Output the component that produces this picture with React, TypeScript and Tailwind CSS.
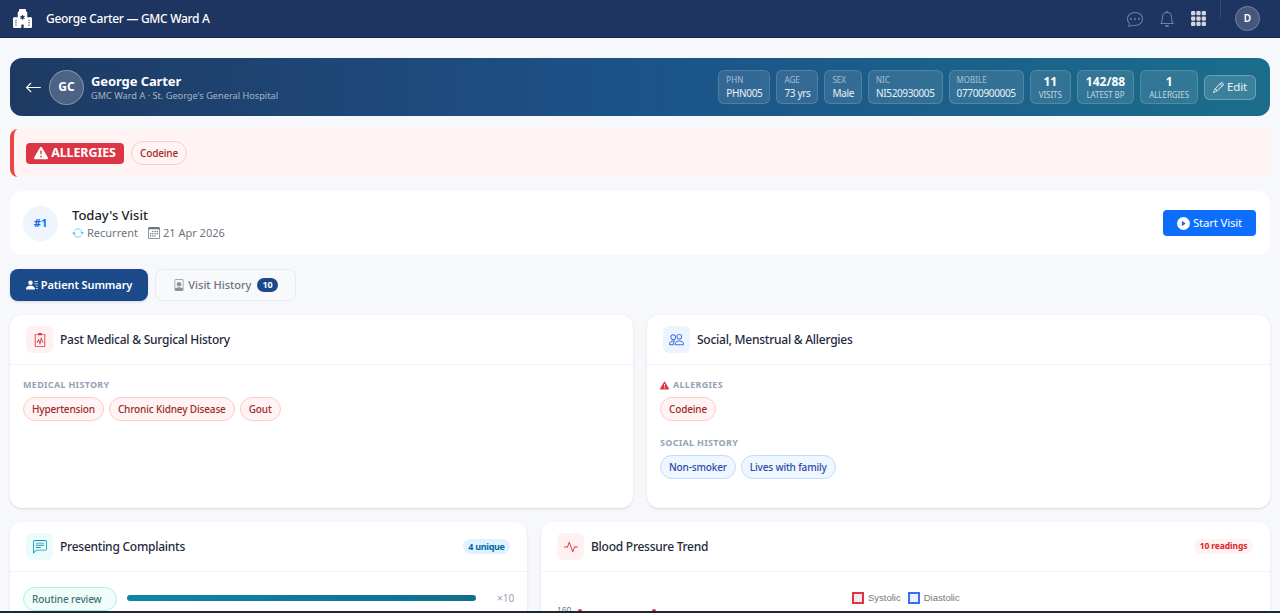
import React from 'react';
import {
  BsActivity,
  BsArrowLeft,
  BsArrowRepeat,
  BsBell,
  BsCalendar3,
  BsChatDots,
  BsChatLeftText,
  BsClipboard2Pulse,
  BsExclamationTriangleFill,
  BsFilePerson,
  BsGrid3X3GapFill,
  BsHospitalFill,
  BsPencil,
  BsPeople,
  BsPersonLinesFill,
  BsPlayCircleFill,
} from 'react-icons/bs';

const InfoBox = ({ label, value }: { label: string; value: string }) => (
  <div className="h-[34px] px-[7px] pt-[3px] rounded-md bg-white/10 border border-white/15">
    <div className="text-[8px] leading-[12px] text-white/55 uppercase">{label}</div>
    <div className="text-[10px] leading-[15px] tracking-[-0.35px] text-white/90 whitespace-nowrap">{value}</div>
  </div>
);

const StatBox = ({ value, label }: { value: string; label: string }) => (
  <div className="h-[34px] px-[8px] pt-[3px] rounded-md bg-white/10 border border-white/15 text-center">
    <div className="text-[12px] leading-[15px] font-bold text-white whitespace-nowrap">{value}</div>
    <div className="text-[8px] leading-[11px] tracking-[-0.05px] text-white/70 uppercase whitespace-nowrap">{label}</div>
  </div>
);

const Chip = ({ children, kind }: { children: string; kind: 'red' | 'blue' }) => (
  <span
    className={
      kind === 'red'
        ? 'h-[24px] px-2 flex items-center rounded-full border border-[#fecaca] bg-[#fff3f3] text-[10px] tracking-[-0.15px] font-medium text-[#9b2c2c]'
        : 'h-[24px] px-2 flex items-center rounded-full border border-[#bfdbfe] bg-[#eff6ff] text-[10px] tracking-[-0.15px] font-medium text-[#2c4aa8]'
    }
  >
    {children}
  </span>
);

const SectionLabel = ({ children }: { children: React.ReactNode }) => (
  <div className="flex items-center gap-1 text-[9px] leading-[12px] font-bold tracking-[0.3px] uppercase text-[#94a3b8]">
    {children}
  </div>
);

const CardHeader = ({
  icon,
  iconBg,
  title,
  badge,
}: {
  icon: React.ReactNode;
  iconBg: string;
  title: string;
  badge?: React.ReactNode;
}) => (
  <div className="h-[50px] pl-4 pr-[17px] flex items-center gap-[7px] border-b border-[#f1f5f9]">
    <div className={`w-[27px] h-[27px] rounded-md flex items-center justify-center ${iconBg}`}>{icon}</div>
    <div className="text-[12px] tracking-[-0.25px] font-medium text-[#1e293b]">{title}</div>
    {badge && <div className="ml-auto">{badge}</div>}
  </div>
);

export default function App() {
  return (
    <div
      className="relative h-[613px] overflow-hidden bg-[#f6f8fb]"
      style={{ fontFamily: '"Noto Sans", sans-serif' }}
    >
      <header className="h-[38px] bg-[#1e3461] border-b border-[#14264c] flex items-center pl-[13px] pr-5 text-white">
        <BsHospitalFill className="w-[19px] h-[19px]" />
        <div className="ml-[14px] text-[12px] tracking-[-0.3px] font-medium">George Carter — GMC Ward A</div>
        <div className="ml-auto flex items-center text-[#6f80a3]">
          <BsChatDots className="w-[16px] h-[16px]" />
          <BsBell className="w-[16px] h-[16px] ml-[16px]" />
          <BsGrid3X3GapFill className="w-[17px] h-[17px] ml-[15px] text-white/80" />
          <div className="ml-[13px] mb-[19px] w-px h-[19px] bg-white/10" />
          <div className="ml-[14px] w-[25px] h-[25px] rounded-full bg-[#46577e] border border-[#7485a8] flex items-center justify-center text-[10px] font-semibold text-white">
            D
          </div>
        </div>
      </header>

      <main className="px-[10px] pt-[20px] flex flex-col gap-[14px]">
        <section className="h-[58px] rounded-xl bg-gradient-to-r from-[#1e3a63] via-[#1c5389] to-[#1b6d8b] flex items-center pl-[15px] pr-[14px] text-white">
          <BsArrowLeft className="w-[17px] h-[17px]" />
          <div className="ml-[7px] w-[35px] h-[35px] rounded-full bg-white/20 border border-white/30 flex items-center justify-center text-[12px] font-bold">
            GC
          </div>
          <div className="ml-[7px]">
            <div className="text-[13px] leading-[17px] font-bold tracking-[-0.1px]">George Carter</div>
            <div className="text-[9.2px] leading-[12px] text-white/60">GMC Ward A · St. George's General Hospital</div>
          </div>
          <div className="ml-auto flex items-center gap-[6px]">
            <InfoBox label="PHN" value="PHN005" />
            <InfoBox label="Age" value="73 yrs" />
            <InfoBox label="Sex" value="Male" />
            <InfoBox label="NIC" value="NI520930005" />
            <InfoBox label="Mobile" value="07700900005" />
            <StatBox value="11" label="Visits" />
            <StatBox value="142/88" label="Latest BP" />
            <StatBox value="1" label="Allergies" />
            <button className="h-[25px] w-[52px] flex items-center justify-center gap-[3px] rounded-md bg-white/15 border border-white/25 text-[11.5px] tracking-[-0.2px] text-white/90">
              <BsPencil className="w-[11px] h-[11px]" />
              Edit
            </button>
          </div>
        </section>

        <section className="h-[48px] -mt-px rounded-lg border-l-4 border-[#ef4444] bg-[#fff3f3] flex items-center pl-[12px] gap-[7px]">
          <div className="h-[21px] w-[98px] flex items-center justify-center gap-[3px] rounded bg-[#dc3545] text-white text-[12.5px] tracking-[-0.1px] font-bold">
            <BsExclamationTriangleFill className="w-[14px] h-[14px]" />
            ALLERGIES
          </div>
          <Chip kind="red">Codeine</Chip>
        </section>

        <section className="h-[64px] rounded-xl bg-white flex items-center px-[13px]">
          <div className="w-[35px] h-[35px] rounded-full bg-[#eef5ff] flex items-center justify-center text-[11px] font-bold text-[#0d6efd]">
            #1
          </div>
          <div className="ml-[14px] mt-[2px]">
            <div className="text-[13px] leading-[18px] font-medium text-[#212529]">Today's Visit</div>
            <div className="flex items-center text-[11px] leading-[18px] text-[#6c757d]">
              <BsArrowRepeat className="w-[12px] h-[12px] text-[#38bdf8] mr-[3px]" />
              Recurrent
              <BsCalendar3 className="w-[12px] h-[12px] ml-[10px] mr-[3px]" />
              21 Apr 2026
            </div>
          </div>
          <button className="ml-auto mr-px h-[26px] w-[93px] flex items-center justify-center gap-[3px] rounded bg-[#0d6efd] text-white text-[11.5px] tracking-[-0.2px]">
            <BsPlayCircleFill className="w-[13px] h-[13px]" />
            Start Visit
          </button>
        </section>

        <nav className="flex gap-[7px]">
          <button className="h-[32px] w-[138px] flex items-center justify-center gap-[3px] rounded-lg bg-[#1a4a8a] text-white text-[11px] tracking-[-0.1px] font-semibold shadow-sm">
            <BsPersonLinesFill className="w-[12px] h-[12px]" />
            Patient Summary
          </button>
          <button className="h-[32px] w-[141px] flex items-center justify-center gap-[3px] rounded-lg border border-[#e9ecef] bg-[#f8f9fa] text-[#6c757d] text-[11px] font-medium">
            <BsFilePerson className="w-[12px] h-[12px] text-[#8a939b]" />
            Visit History
            <span className="ml-[3px] h-[14px] px-[5px] flex items-center rounded-full bg-[#1a4a8a] text-white text-[9px] font-bold">
              10
            </span>
          </button>
        </nav>

        <div className="grid grid-cols-2 gap-[14px]">
          <div className="h-[193px] rounded-xl bg-white shadow-sm">
            <CardHeader
              icon={<BsClipboard2Pulse className="w-[14px] h-[14px] text-[#dc3545]" />}
              iconBg="bg-[#fff1f1]"
              title="Past Medical & Surgical History"
            />
            <div className="px-[13px] pt-[14px]">
              <SectionLabel>Medical History</SectionLabel>
              <div className="mt-[6px] flex gap-[5px]">
                <Chip kind="red">Hypertension</Chip>
                <Chip kind="red">Chronic Kidney Disease</Chip>
                <Chip kind="red">Gout</Chip>
              </div>
            </div>
          </div>
          <div className="h-[193px] rounded-xl bg-white shadow-sm">
            <CardHeader
              icon={<BsPeople className="w-[15px] h-[15px] text-[#3b6fd8]" />}
              iconBg="bg-[#eef4ff]"
              title="Social, Menstrual & Allergies"
            />
            <div className="px-[13px] pt-[14px]">
              <SectionLabel>
                <BsExclamationTriangleFill className="w-[9px] h-[9px] text-[#dc3545]" />
                Allergies
              </SectionLabel>
              <div className="mt-[6px] flex gap-[5px]">
                <Chip kind="red">Codeine</Chip>
              </div>
              <div className="mt-[16px]">
                <SectionLabel>Social History</SectionLabel>
              </div>
              <div className="mt-[6px] flex gap-[5px]">
                <Chip kind="blue">Non-smoker</Chip>
                <Chip kind="blue">Lives with family</Chip>
              </div>
            </div>
          </div>
        </div>

        <div className="grid grid-cols-[517px_1fr] gap-[14px]">
          <div className="h-[200px] rounded-xl bg-white shadow-sm">
            <CardHeader
              icon={<BsChatLeftText className="w-[14px] h-[14px] text-[#0e9ab5]" />}
              iconBg="bg-[#ecfbfb]"
              title="Presenting Complaints"
              badge={
                <span className="h-[15px] w-[47px] flex items-center justify-center rounded-full bg-[#e0f2fe] text-[9px] tracking-[-0.3px] font-bold text-[#0369a1]">
                  4 unique
                </span>
              }
            />
            <div className="pl-[13px] pr-[13px] pt-[15px] flex items-start">
              <span className="h-[24px] w-[94px] pl-2 flex items-center rounded-full border border-[#a7f3e4] bg-[#f0fdfa] text-[10px] tracking-[-0.1px] font-medium text-[#3f7378]">
                Routine review
              </span>
              <div className="ml-[10px] mt-[8px] flex-1 h-[6px] rounded-full bg-gradient-to-r from-[#0e86a8] to-[#0f6f8e]" />
              <span className="ml-[21px] w-[17px] mt-px text-[10px] leading-[20px] text-[#94a3b8]">×10</span>
            </div>
          </div>
          <div className="h-[200px] rounded-xl bg-white shadow-sm">
            <CardHeader
              icon={<BsActivity className="w-[14px] h-[14px] text-[#dc3545]" />}
              iconBg="bg-[#fff1f1]"
              title="Blood Pressure Trend"
              badge={
                <span className="h-[15px] w-[59px] flex items-center justify-center rounded-full bg-[#fef2f2] text-[8.5px] tracking-[-0.1px] font-bold text-[#dc2626]">
                  10 readings
                </span>
              }
            />
            <div className="relative h-[150px]">
              <div
                className="absolute left-[311px] top-[20px] flex items-center text-[9.5px] leading-[12px] text-[#777]"
                style={{ fontFamily: '"Liberation Sans", sans-serif' }}
              >
                <span className="w-[12px] h-[12px] border-2 border-[#dc3545] bg-[#dc3545]/10" />
                <span className="ml-[4px]">Systolic</span>
                <span className="ml-[7px] w-[12px] h-[12px] border-2 border-[#3b6ff0] bg-[#3b6ff0]/10" />
                <span className="ml-[4px]">Diastolic</span>
              </div>
              <span
                className="absolute left-[16px] top-[32px] text-[8.5px] text-[#777]"
                style={{ fontFamily: '"Liberation Sans", sans-serif' }}
              >
                160
              </span>
              <span className="absolute left-[37px] top-[37px] w-[4px] h-[4px] rounded-full bg-[#dc3545]" />
              <span className="absolute left-[111px] top-[37px] w-[4px] h-[4px] rounded-full bg-[#dc3545]" />
            </div>
          </div>
        </div>
      </main>

      <div className="absolute left-0 right-0 bottom-0 h-[2px] bg-[#1b2733]" />
    </div>
  );
}
